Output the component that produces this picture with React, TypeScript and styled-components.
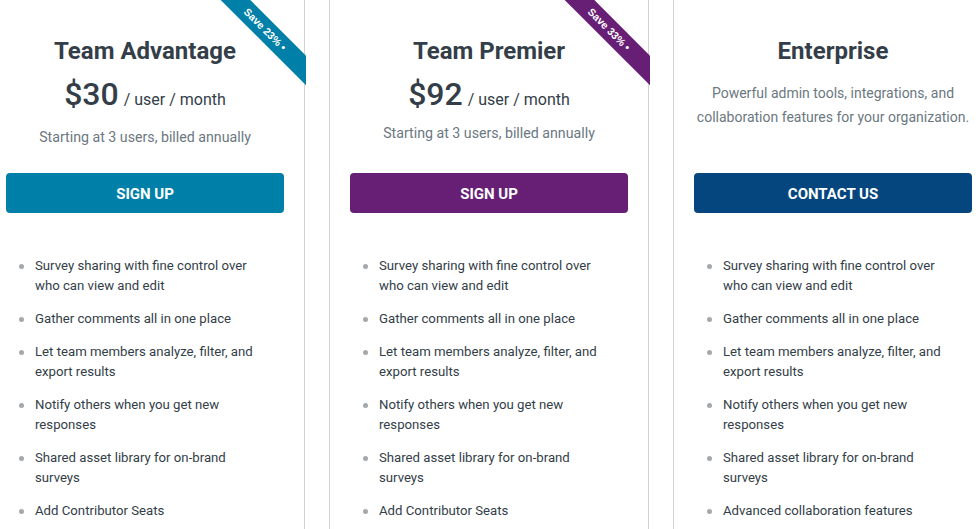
import React from "react";
import styled, { createGlobalStyle } from "styled-components";

const GlobalStyle = createGlobalStyle`
  html, body {
    margin: 0;
    padding: 0;
    background: #ffffff;
    overflow: hidden;
  }
  body {
    font-family: Roboto, "Liberation Sans", Arial, sans-serif;
    color: #333e48;
  }
  * { box-sizing: border-box; }
`;

const Page = styled.div`
  width: 979px;
  height: 529px;
  overflow: hidden;
`;

const Row = styled.div`
  display: flex;
  gap: 24px;
  margin-left: -15px;
  margin-top: -20px;
`;

const Card = styled.section`
  position: relative;
  flex: 0 0 320px;
  width: 320px;
  height: 600px;
  border: 1px solid #d0d2d3;
  padding: 55px 20px 0 20px;
  display: flex;
  flex-direction: column;
`;

const RibbonClip = styled.div`
  position: absolute;
  top: 0;
  right: -2px;
  width: 110px;
  height: 110px;
  overflow: hidden;
  pointer-events: none;
`;

const Ribbon = styled.div<{ $color: string }>`
  position: absolute;
  left: -31px;
  top: 37.5px;
  width: 200px;
  height: 21px;
  background: ${(p) => p.$color};
  transform: rotate(45deg);
  color: #ffffff;
  font-family: "Liberation Sans", Arial, sans-serif;
  font-weight: 700;
  font-size: 10.5px;
  line-height: 21px;
  text-align: center;
  white-space: nowrap;
`;

const Header = styled.div`
  height: 137px;
  display: flex;
  flex-direction: column;
  align-items: center;
  text-align: center;
`;

const Title = styled.h2`
  margin: 0;
  font-size: 24px;
  line-height: 30px;
  font-weight: 700;
  color: #333e48;
`;

const PriceRow = styled.div`
  margin-top: 8px;
  height: 40px;
  display: flex;
  align-items: baseline;
  justify-content: center;
  gap: 5px;
  color: #333e48;
`;

const Amount = styled.span`
  font-size: 32px;
  line-height: 40px;
  font-weight: 500;
`;

const Per = styled.span`
  font-size: 16px;
  font-weight: 400;
`;

const Note = styled.p<{ $gap: number }>`
  margin: ${(p) => p.$gap}px 0 0 0;
  font-size: 14.2px;
  line-height: 20px;
  color: #6b787f;
`;

const Description = styled.p`
  margin: 15px 0 0 0;
  font-size: 14px;
  line-height: 24px;
  color: #6b787f;
  white-space: nowrap;
`;

const Button = styled.button<{ $color: string }>`
  height: 40px;
  width: 100%;
  border: none;
  border-radius: 4px;
  padding: 2px 0 0 0;
  background: ${(p) => p.$color};
  color: #ffffff;
  font-family: Roboto, "Liberation Sans", Arial, sans-serif;
  font-size: 15px;
  font-weight: 700;
  text-transform: uppercase;
  cursor: pointer;
`;

const List = styled.ul`
  list-style: none;
  margin: 43px 0 0 0;
  padding: 0;
  display: flex;
  flex-direction: column;
  gap: 12.3px;
`;

const Item = styled.li`
  position: relative;
  padding-left: 29px;
  padding-right: 24px;
  font-size: 13.2px;
  line-height: 20.4px;
  color: #333e48;

  &::before {
    content: "";
    position: absolute;
    left: 13px;
    top: 8px;
    width: 5px;
    height: 5px;
    border-radius: 50%;
    background: #a3a9ad;
  }
`;

type Plan = {
  name: string;
  price?: string;
  note?: string;
  noteGap?: number;
  description?: string[];
  ribbon?: string;
  color: string;
  cta: string;
  features: string[];
};

const common = [
  "Survey sharing with fine control over who can view and edit",
  "Gather comments all in one place",
  "Let team members analyze, filter, and export results",
  "Notify others when you get new responses",
  "Shared asset library for on-brand surveys",
];

const plans: Plan[] = [
  {
    name: "Team Advantage",
    price: "$30",
    note: "Starting at 3 users, billed annually",
    noteGap: 13,
    ribbon: "Save 23% •",
    color: "#0080a8",
    cta: "Sign up",
    features: [...common, "Add Contributor Seats"],
  },
  {
    name: "Team Premier",
    price: "$92",
    note: "Starting at 3 users, billed annually",
    noteGap: 9,
    ribbon: "Save 33% •",
    color: "#671e75",
    cta: "Sign up",
    features: [...common, "Add Contributor Seats"],
  },
  {
    name: "Enterprise",
    description: [
      "Powerful admin tools, integrations, and",
      "collaboration features for your organization.",
    ],
    color: "#05467e",
    cta: "Contact us",
    features: [...common, "Advanced collaboration features"],
  },
];

export default function App() {
  return (
    <Page>
      <GlobalStyle />
      <Row>
        {plans.map((plan) => (
          <Card key={plan.name}>
            {plan.ribbon && (
              <RibbonClip>
                <Ribbon $color={plan.color}>{plan.ribbon}</Ribbon>
              </RibbonClip>
            )}
            <Header>
              <Title>{plan.name}</Title>
              {plan.price && (
                <PriceRow>
                  <Amount>{plan.price}</Amount>
                  <Per>/ user / month</Per>
                </PriceRow>
              )}
              {plan.note && <Note $gap={plan.noteGap ?? 10}>{plan.note}</Note>}
              {plan.description && (
                <Description>
                  {plan.description[0]}
                  <br />
                  {plan.description[1]}
                </Description>
              )}
            </Header>
            <Button $color={plan.color}>{plan.cta}</Button>
            <List>
              {plan.features.map((f) => (
                <Item key={f}>{f}</Item>
              ))}
            </List>
          </Card>
        ))}
      </Row>
    </Page>
  );
}
